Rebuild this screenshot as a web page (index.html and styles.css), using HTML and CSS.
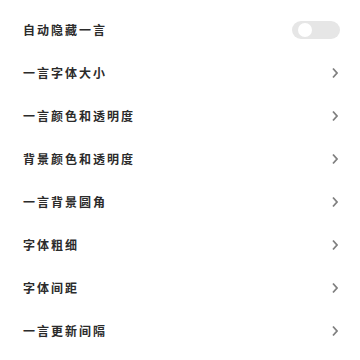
FILE: index.html
```html
<!DOCTYPE html>
<html lang="zh-CN">
<head>
    <meta charset="UTF-8">
    <meta name="viewport" content="width=device-width, initial-scale=1.0">
    <title>一言设置</title>
    <link rel="stylesheet" href="styles.css">
</head>
<body>
    <div class="settings">
        <div class="row">
            <span class="label">自动隐藏一言</span>
            <span class="switch"><span class="knob"></span></span>
        </div>
        <div class="row">
            <span class="label">一言字体大小</span>
            <svg class="arrow" viewBox="0 0 6 12"><path d="M1 1.5 L5 6 L1 10.5"/></svg>
        </div>
        <div class="row">
            <span class="label">一言颜色和透明度</span>
            <svg class="arrow" viewBox="0 0 6 12"><path d="M1 1.5 L5 6 L1 10.5"/></svg>
        </div>
        <div class="row">
            <span class="label">背景颜色和透明度</span>
            <svg class="arrow" viewBox="0 0 6 12"><path d="M1 1.5 L5 6 L1 10.5"/></svg>
        </div>
        <div class="row">
            <span class="label">一言背景圆角</span>
            <svg class="arrow" viewBox="0 0 6 12"><path d="M1 1.5 L5 6 L1 10.5"/></svg>
        </div>
        <div class="row">
            <span class="label">字体粗细</span>
            <svg class="arrow" viewBox="0 0 6 12"><path d="M1 1.5 L5 6 L1 10.5"/></svg>
        </div>
        <div class="row">
            <span class="label">字体间距</span>
            <svg class="arrow" viewBox="0 0 6 12"><path d="M1 1.5 L5 6 L1 10.5"/></svg>
        </div>
        <div class="row">
            <span class="label">一言更新间隔</span>
            <svg class="arrow" viewBox="0 0 6 12"><path d="M1 1.5 L5 6 L1 10.5"/></svg>
        </div>
    </div>
</body>
</html>
```

FILE: styles.css
```css
* {
    box-sizing: border-box;
    margin: 0;
    padding: 0;
}
body {
    font-family: "Noto Sans CJK SC", "Noto Sans", sans-serif;
    background: #ffffff;
    width: 360px;
    height: 360px;
    overflow: hidden;
}
.settings {
    padding: 8px 20px 0 23px;
}
.row {
    height: 43px;
    display: flex;
    align-items: center;
    justify-content: space-between;
}
.label {
    font-size: 12px;
    font-weight: 700;
    letter-spacing: 2px;
    color: #2b2b2b;
}
.switch {
    width: 48px;
    height: 18px;
    border-radius: 9px;
    background: #e6e6e6;
    display: flex;
    align-items: center;
    padding-left: 6px;
}
.knob {
    width: 14px;
    height: 14px;
    border-radius: 50%;
    background: #ffffff;
}
.arrow {
    width: 6px;
    height: 12px;
    margin-right: 2px;
    fill: none;
    stroke: #808080;
    stroke-width: 1.8;
}
```
